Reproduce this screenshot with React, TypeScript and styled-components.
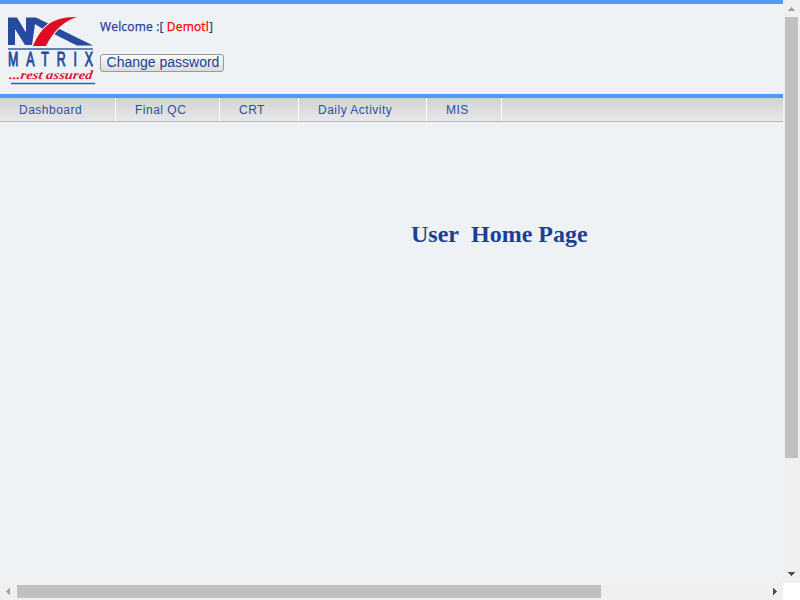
import React from "react";
import styled, { createGlobalStyle } from "styled-components";

const GlobalStyle = createGlobalStyle`
  * { box-sizing: border-box; }
  html, body { margin: 0; padding: 0; overflow: hidden; background: #fff; }
`;

const Window = styled.div`
  display: grid;
  grid-template: 583px 17px / 783px 17px;
  width: 800px;
  height: 600px;
  overflow: hidden;
`;

const Page = styled.div`
  background: #eef2f5;
  overflow: hidden;
  color: #1c3f94;
`;

const Header = styled.header`
  display: flex;
  height: 98px;
  border-top: 4px solid #4b9bf7;
  border-bottom: 4px solid #4b9bf7;
`;

const Logo = styled.svg`
  display: block;
  flex: none;
  width: 100px;
  height: 90px;
`;

const Account = styled.div`
  display: flex;
  flex-direction: column;
  align-items: flex-start;
`;

const Welcome = styled.div`
  height: 18px;
  margin-top: 14px;
  font: 500 12px/18px "Open Sans", sans-serif;
  letter-spacing: 0.17px;
  -webkit-text-stroke: 0.25px currentColor;
  white-space: pre;
`;

const UserName = styled.span`
  color: #ff0000;
`;

const PasswordButton = styled.button`
  width: 124px;
  height: 18px;
  margin: 18px 0 0;
  padding: 0 0 1px 2px;
  border: 1px solid #999;
  border-radius: 3px;
  background: linear-gradient(#fafafa, #dcdcdc);
  color: #1c3f94;
  font: 14px/15px "Liberation Sans", Arial, sans-serif;
  white-space: nowrap;
`;

const Menu = styled.nav`
  display: flex;
  height: 24px;
  border-bottom: 1px solid #b4bac4;
  background: linear-gradient(#d2d2d2, #e8e8e8);
`;

const MenuItem = styled.a<{ $width: number }>`
  width: ${(p) => p.$width}px;
  padding: 1px 0 0 19px;
  border-right: 1px solid #fff;
  color: #2f4f9d;
  font: 12px/23px "Liberation Sans", Arial, sans-serif;
  letter-spacing: 0.5px;
  white-space: nowrap;
`;

const Title = styled.h1`
  margin: 98px 0 0 411px;
  font: bold 24px/28px "Liberation Serif", "Times New Roman", serif;
  white-space: pre;
`;

const ScrollBar = styled.div<{ $vertical?: boolean }>`
  display: flex;
  flex-direction: ${(p) => (p.$vertical ? "column" : "row")};
  justify-content: space-between;
  background: #f0f0f0;
`;

const Thumb = styled.div<{ $vertical?: boolean }>`
  width: ${(p) => (p.$vertical ? "13px" : "584px")};
  height: ${(p) => (p.$vertical ? "441px" : "13px")};
  margin: ${(p) => (p.$vertical ? "0 0 auto 2px" : "2px auto 0 0")};
  background: #c0c0c0;
`;

const Arrow = styled.svg`
  display: block;
  flex: none;
  width: 17px;
  height: 17px;
  shape-rendering: crispEdges;
`;

const items = [
  { label: "Dashboard", width: 116 },
  { label: "Final QC", width: 104 },
  { label: "CRT", width: 79 },
  { label: "Daily Activity", width: 128 },
  { label: "MIS", width: 75 },
];

function MatrixLogo() {
  return (
    <Logo viewBox="0 4 100 90">
      <path d="M8 45V17.500h9l9 15v-15h10L93 45.500H77L49 31.500l-7-3L35 24l-3 21h-7L15 29v16z" fill="#264a9d" />
      <path d="M33 46C41 28 51 16.500 77 17C64 21 54 30 46 46Z" fill="#e10a24" stroke="#eef2f5" strokeWidth="2" paintOrder="stroke" />
      <path d="M8 49h85" stroke="#3b5ba5" strokeWidth="1.4" />
      <g transform="translate(8 66.300) scale(.62 1)">
        <text x="0" y="0" textLength="137" fill="#264a9d" fontFamily="Liberation Sans, Arial, sans-serif" fontSize="20" stroke="#264a9d" strokeWidth="1">MATRIX</text>
      </g>
      <text transform="translate(9 79) skewX(-8)" x="0" y="0" textLength="83" lengthAdjust="spacingAndGlyphs" fill="#dc1737" fontFamily="Liberation Serif, serif" fontStyle="italic" fontWeight="700" fontSize="12.5">...rest assured</text>
      <path d="M11 83.500h84" stroke="#3b5ba5" strokeWidth="1.4" />
    </Logo>
  );
}

export default function App() {
  return (
    <>
      <GlobalStyle />
      <Window>
        <Page>
          <Header>
            <MatrixLogo />
            <Account>
              <Welcome>Welcome :[ <UserName>Demotl</UserName>]</Welcome>
              <PasswordButton>Change password</PasswordButton>
            </Account>
          </Header>
          <Menu>
            {items.map((item) => (
              <MenuItem key={item.label} $width={item.width}>{item.label}</MenuItem>
            ))}
          </Menu>
          <Title>{"User\u00a0 Home Page"}</Title>
        </Page>
        <ScrollBar $vertical>
          <Arrow viewBox="0 0 17 17"><path d="M5 11V10h1V9h1V8h1V7h1v1h1v1h1v1h1v1z" fill="#a3a3a3" /></Arrow>
          <Thumb $vertical />
          <Arrow viewBox="0 0 17 17"><path d="M5 6h7v1h-1v1h-1v1H9v1H8V9H7V8H6V7H5z" fill="#505050" /></Arrow>
        </ScrollBar>
        <ScrollBar>
          <Arrow viewBox="0 0 17 17"><path d="M10 5v7H9v-1H8v-1H7V9H6V8h1V7h1V6h1V5z" fill="#a3a3a3" /></Arrow>
          <Thumb />
          <Arrow viewBox="0 0 17 17"><path d="M7 5h1v1h1v1h1v1h1v1h-1v1H9v1H8v1H7z" fill="#505050" /></Arrow>
        </ScrollBar>
      </Window>
    </>
  );
}
